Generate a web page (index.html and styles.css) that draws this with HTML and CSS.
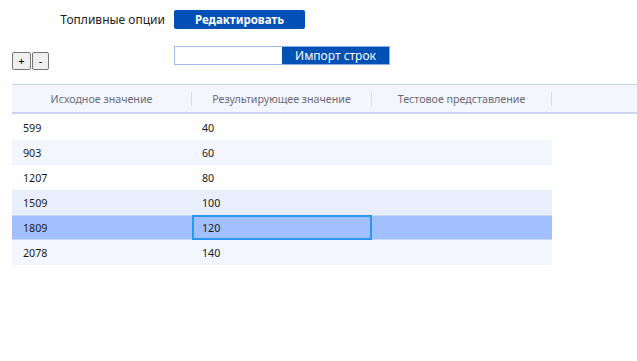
FILE: index.html
```html
<!DOCTYPE html>
<html>
<head>
    <title>Топливные опции</title>
    <link rel="stylesheet" href="styles.css">
</head>
<body>
    <div class="toolbar">
        <div class="tool-row">
            <div class="label">Топливные опции</div>
            <button class="btn-edit">Редактировать</button>
        </div>
        <div class="tool-row second">
            <div class="row-buttons">
                <button class="btn-small">+</button>
                <button class="btn-small">-</button>
            </div>
            <div class="import">
                <input type="text" class="import-input">
                <button class="btn-import">Импорт строк</button>
            </div>
        </div>
    </div>

    <div class="grid">
        <div class="grid-head">
            <div class="hcell">Исходное значение</div>
            <div class="hcell">Результирующее значение</div>
            <div class="hcell">Тестовое представление</div>
            <div class="hcell last"></div>
        </div>
        <div class="grid-body">
            <div class="grow"><div class="cell">599</div><div class="cell">40</div><div class="cell"></div></div>
            <div class="grow alt"><div class="cell">903</div><div class="cell">60</div><div class="cell"></div></div>
            <div class="grow"><div class="cell">1207</div><div class="cell">80</div><div class="cell"></div></div>
            <div class="grow hover"><div class="cell">1509</div><div class="cell">100</div><div class="cell"></div></div>
            <div class="grow selected"><div class="cell">1809</div><div class="cell focused">120</div><div class="cell"></div></div>
            <div class="grow alt"><div class="cell">2078</div><div class="cell">140</div><div class="cell"></div></div>
        </div>
    </div>
</body>
</html>
```

FILE: styles.css
```css
body {
    margin: 0;
    font-family: "Noto Sans", "Open Sans", sans-serif;
    color: #222;
    background: #fff;
}
.toolbar {
    padding: 10px 0 0 12px;
}
.tool-row {
    display: grid;
    grid-template-columns: 162px auto;
    align-items: center;
}
.tool-row.second {
    margin-top: 17px;
    align-items: start;
}
.label {
    text-align: right;
    padding-right: 9px;
    font-size: 12px;
    color: #222;
}
.btn-edit {
    width: 131px;
    height: 19px;
    background: #0050b5;
    color: #fff;
    border: none;
    border-radius: 2px;
    font-family: "Noto Sans", sans-serif;
    font-weight: bold;
    font-size: 11.5px;
    padding: 0;
    cursor: pointer;
}
.row-buttons {
    display: flex;
    gap: 1px;
    margin-top: 6px;
}
.btn-small {
    width: 19px;
    height: 18px;
    padding: 0;
    background: #efefef;
    border: 1px solid #767676;
    border-radius: 2px;
    font-family: "Noto Sans", sans-serif;
    font-size: 11px;
    line-height: 14px;
    color: #000;
}
.btn-small + .btn-small {
    width: 17px;
}
.import {
    display: flex;
}
.import-input {
    width: 108px;
    height: 19px;
    box-sizing: border-box;
    border: 1px solid #a5bde6;
    border-right: none;
    padding: 0 4px;
    margin: 0;
}
.btn-import {
    width: 108px;
    height: 19px;
    background: #0050b5;
    color: #fff;
    border: 1px solid #8ab0e6;
    border-left: none;
    font-family: "Noto Sans", sans-serif;
    font-size: 12px;
    padding: 0;
}
.grid {
    margin: 14px 0 0 12px;
    font-size: 10.7px;
}
.grid-head {
    display: grid;
    grid-template-columns: 180px 180px 180px 1fr;
    height: 27px;
    background: #f3f6fd;
    border-top: 1px solid #c9d5ee;
    border-bottom: 2px solid #c9d5ee;
    align-items: center;
}
.hcell {
    text-align: center;
    color: #6b6b78;
    border-right: 1px solid #d8dce3;
    line-height: 14px;
}
.hcell.last {
    border-right: none;
}
.grid-body {
    width: 540px;
    padding-top: 1px;
}
.grow {
    display: grid;
    grid-template-columns: 180px 180px 180px;
    height: 25px;
    align-items: stretch;
}
.grow.alt {
    background: #f3f6fe;
}
.grow.hover {
    background: #e8eefb;
}
.grow.selected {
    background: #a3c0fe;
    border-top: 1px solid #c9d7f7;
    border-bottom: 1px solid #c9d7f7;
    height: 23px;
}
.cell {
    display: flex;
    align-items: center;
    padding-left: 11px;
    color: #1a1a1a;
}
.cell + .cell {
    padding-left: 10px;
}
.cell.focused {
    border: 2px solid #2b98ef;
    margin: -1px 0;
    padding-left: 8px;
}
```
